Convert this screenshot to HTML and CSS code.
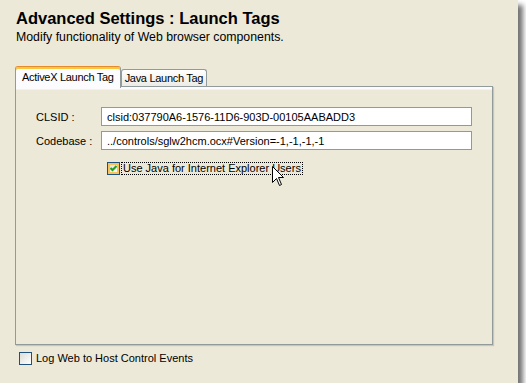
FILE: index.html
```html
<!DOCTYPE html>
<html lang="en">
<head>
    <meta charset="UTF-8">
    <title>Advanced Settings : Launch Tags</title>
    <link rel="stylesheet" href="styles.css">
</head>
<body>
    <div class="window">
        <div class="header">
            <h1 class="title">Advanced Settings : Launch Tags</h1>
            <p class="subtitle">Modify functionality of Web browser components.</p>
        </div>

        <div class="tabs">
            <div class="tab tab-active">ActiveX Launch Tag</div>
            <div class="tab">Java Launch Tag</div>
        </div>

        <div class="tab-panel">
            <div class="field-row">
                <label class="field-label" for="clsid">CLSID :</label>
                <input class="field-input" id="clsid" type="text" value="clsid:037790A6-1576-11D6-903D-00105AABADD3">
            </div>
            <div class="field-row">
                <label class="field-label" for="codebase">Codebase :</label>
                <input class="field-input" id="codebase" type="text" value="../controls/sglw2hcm.ocx#Version=-1,-1,-1,-1">
            </div>
            <div class="check-row check-row-indent">
                <span class="checkbox checkbox-hover">
                    <svg viewBox="0 0 7 7" width="7" height="7">
                        <polyline points="0.5,3 2.5,5 6.5,1" fill="none" stroke="#21a121" stroke-width="2"/>
                    </svg>
                </span>
                <span class="check-label check-label-focus">Use Java for Internet Explorer Users</span>
            </div>
        </div>

        <div class="footer">
            <div class="check-row">
                <span class="checkbox"></span>
                <span class="check-label">Log Web to Host Control Events</span>
            </div>
        </div>

        <!-- mouse pointer over the checkbox label -->
        <svg class="cursor" viewBox="0 0 12 21" width="12" height="21">
            <polygon points="0.5,0.5 0.5,16.5 4.5,12.5 7.5,19.5 9.5,18.5 6.5,11.5 11.5,11.5" fill="#fff" stroke="#000" stroke-width="1"/>
        </svg>
    </div>
</body>
</html>
```

FILE: styles.css
```css
body {
    margin: 0;
    background-color: #fff;
    font-family: "Liberation Sans", Arial, sans-serif;
    color: #000;
}
.window {
    position: relative;
    width: 518px;
    height: 383px;
    background-color: #ece9d8;
    box-shadow: 5px 5px 5px rgba(0,0,0,0.55);
}
.header {
    padding: 8px 16px 0;
}
.title {
    margin: 0;
    font-size: 16.5px;
    line-height: 20px;
    font-weight: bold;
}
.subtitle {
    margin: 1px 0 0;
    font-size: 12.3px;
    line-height: 16px;
}
.tabs {
    display: flex;
    align-items: flex-end;
    height: 22px;
    margin: 20px 0 0 15px;
}
.tab {
    box-sizing: border-box;
    height: 17px;
    margin-bottom: 1px;
    padding: 0 3px;
    border: 1px solid #919b9c;
    border-bottom: none;
    border-radius: 3px 3px 0 0;
    background: linear-gradient(#fff, #ecebe6);
    font-size: 11px;
    line-height: 16px;
    letter-spacing: -0.3px;
    white-space: nowrap;
}
.tab-active {
    position: relative;
    z-index: 1;
    height: 22px;
    margin-bottom: -1px;
    padding: 2px 6px 0;
    border-top: 1px solid #e68b2c;
    background: #fcfcfe;
    box-shadow: inset 0 2px 0 #ffc73c;
}
.tab-panel {
    box-sizing: border-box;
    height: 259px;
    margin: -1px 25px 0 15px;
    padding: 20px 20px 0;
    border: 1px solid #919b9c;
    background: linear-gradient(#fcfcfe 0, #fcfcfe 2px, #ece9d8 3px);
    box-shadow: 1px 1px 1px rgba(0,0,0,0.15);
}
.field-row {
    display: flex;
    align-items: center;
    margin-bottom: 5px;
}
.field-label {
    width: 65px;
    flex-shrink: 0;
    font-size: 11px;
}
.field-input {
    box-sizing: border-box;
    width: 371px;
    height: 19px;
    margin: 0;
    padding: 0 5px;
    border: 1px solid #7f9db9;
    background-color: #fff;
    font-family: "Liberation Sans", Arial, sans-serif;
    font-size: 11px;
    color: #000;
    outline: none;
}
.check-row {
    display: flex;
    align-items: center;
    gap: 1px;
    font-size: 11px;
}
.check-row-indent {
    margin: 12px 0 0 71px;
}
.checkbox {
    box-sizing: border-box;
    display: flex;
    justify-content: center;
    align-items: center;
    width: 13px;
    height: 13px;
    border: 1px solid #1c5180;
    background: linear-gradient(135deg, #dcdcd7, #fff);
}
.checkbox-hover {
    box-shadow: inset 0 0 0 2px #f8c35a;
}
.check-label {
    padding: 0 1px;
    border: 1px solid transparent;
    line-height: 11px;
    white-space: nowrap;
}
.check-label-focus {
    border: 1px dotted #000;
}
.footer {
    padding: 7px 0 0 19px;
}
.footer .check-row {
    gap: 2px;
}
.cursor {
    position: absolute;
    left: 272px;
    top: 166px;
}
```
